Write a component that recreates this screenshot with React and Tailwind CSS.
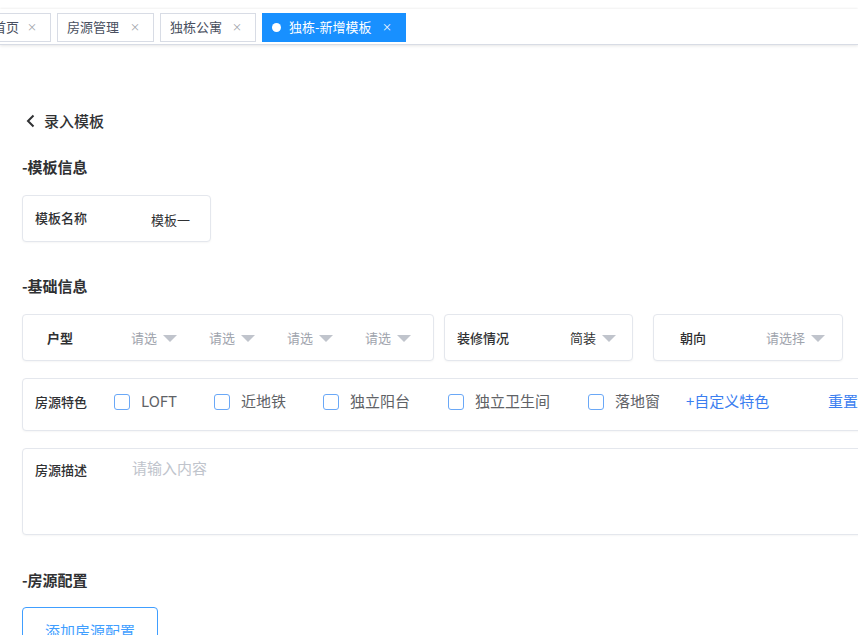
import React from "react";

const font = { fontFamily: '"Noto Sans CJK SC", "Noto Sans", sans-serif' };

function Tab({ label, active, className }) {
  if (active) {
    return (
      <div className={`flex items-center h-[29px] shrink-0 whitespace-nowrap bg-[#1890ff] border border-[#1890ff] text-white text-[13px] pl-[9px] pr-[13px] ${className || ""}`}>
        <span className="w-[9px] h-[9px] rounded-full bg-white mr-[8px] shrink-0" />
        <span className="whitespace-nowrap">{label}</span>
        <span className="ml-auto text-[10px] leading-none">×</span>
      </div>
    );
  }
  return (
    <div className={`flex items-center h-[29px] shrink-0 whitespace-nowrap bg-white border border-[#d8dce5] text-[#495060] text-[13px] pl-[9px] pr-[13px] ${className || ""}`}>
      <span className="whitespace-nowrap">{label}</span>
      <span className="ml-auto text-[10px] leading-none text-[#9a9ea6]">×</span>
    </div>
  );
}

function Caret() {
  return (
    <svg width="14" height="7" viewBox="0 0 14 7" className="shrink-0">
      <path d="M0 0 L14 0 L7 7 Z" fill="#c0c4cc" />
    </svg>
  );
}

function Select({ text, dark, className }) {
  return (
    <div className={`flex items-center ${className || ""}`}>
      <span className={dark ? "text-[#303133] text-[13px]" : "text-[#a0a4ad] text-[13px]"}>{text}</span>
      <span className="ml-[6px] mt-[1px]"><Caret /></span>
    </div>
  );
}

function Check({ label, className }) {
  return (
    <div className={`flex items-center ${className || ""}`}>
      <span className="w-[16px] h-[16px] rounded-[3px] border border-[#6aa8f7] bg-white shrink-0" />
      <span className="ml-[11px] text-[15px] text-[#606266] whitespace-nowrap">{label}</span>
    </div>
  );
}

const card = "bg-white border border-[#e4e7ed] rounded-[4px] shadow-[0_1px_2px_rgba(0,0,0,0.04)]";

export default function App() {
  return (
    <div className="w-[858px] h-[635px] overflow-hidden bg-white relative" style={font}>
      <div className="pt-[9px]">
        <div className="h-[36px] bg-white border-b border-[#d8dce5] shadow-[0_1px_3px_rgba(0,0,0,0.10),0_-1px_2px_rgba(0,0,0,0.04)] flex items-center pt-[1px] overflow-hidden">
          <div className="flex items-center gap-[6px] ml-[-17px]">
            <Tab label="首页" className="w-[68px]" />
            <Tab label="房源管理" className="w-[97px]" />
            <Tab label="独栋公寓" className="w-[96px]" />
            <Tab label="独栋-新增模板" active className="w-[144px]" />
          </div>
        </div>
      </div>

      <div className="pl-[22px] flex flex-col text-[#303133]">
        <div className="mt-[65px] h-[22px] flex items-center">
          <svg width="12" height="14" viewBox="0 0 12 14" className="ml-[3px]">
            <path d="M8.5 1.5 L3 7 L8.5 12.5" fill="none" stroke="#303133" strokeWidth="2" />
          </svg>
          <span className="ml-[7px] text-[15px] font-medium">录入模板</span>
        </div>

        <div className="mt-[24px] h-[22px] text-[15px] font-semibold leading-[22px]">-模板信息</div>

        <div className={`${card} mt-[17px] w-[189px] h-[47px] flex items-center pl-[12px]`}>
          <span className="text-[13px] font-medium text-[#303133] mb-[2px]">模板名称</span>
          <span className="ml-[64px] text-[13px] text-[#303133] mt-[2px]">模板一</span>
        </div>

        <div className="mt-[33px] h-[22px] text-[15px] font-semibold leading-[22px]">-基础信息</div>

        <div className="mt-[17px] flex items-center h-[47px]">
          <div className={`${card} w-[412px] h-[47px] flex items-center pl-[24px]`}>
            <span className="text-[13px] font-semibold w-[84px]">户型</span>
            <Select text="请选" className="w-[78px]" />
            <Select text="请选" className="w-[78px]" />
            <Select text="请选" className="w-[78px]" />
            <Select text="请选" />
          </div>
          <div className={`${card} ml-[10px] w-[189px] h-[47px] flex items-center pl-[12px]`}>
            <span className="text-[13px] font-medium w-[113px]">装修情况</span>
            <Select text="简装" dark />
          </div>
          <div className={`${card} ml-[20px] w-[190px] h-[47px] flex items-center pl-[26px]`}>
            <span className="text-[13px] font-medium w-[86px]">朝向</span>
            <Select text="请选择" />
          </div>
        </div>

        <div className={`${card} mt-[17px] w-[900px] h-[53px] flex items-center pl-[12px] pb-[6px]`}>
          <span className="text-[13px] font-medium w-[79px]">房源特色</span>
          <Check label="LOFT" className="w-[100px]" />
          <Check label="近地铁" className="w-[109px]" />
          <Check label="独立阳台" className="w-[125px]" />
          <Check label="独立卫生间" className="w-[140px]" />
          <Check label="落地窗" className="w-[98px]" />
          <span className="text-[15px] text-[#3b7ef0] w-[142px]">+自定义特色</span>
          <span className="text-[15px] text-[#3b7ef0]">重置</span>
        </div>

        <div className={`${card} mt-[17px] w-[900px] h-[87px] flex items-start pl-[12px] pt-[8px]`}>
          <span className="text-[13px] font-medium w-[97px] mt-[3px]">房源描述</span>
          <span className="text-[15px] text-[#c0c4cc]">请输入内容</span>
        </div>

        <div className="mt-[34px] h-[22px] text-[15px] font-semibold leading-[22px]">-房源配置</div>

        <div className="mt-[16px] w-[136px] h-[42px] border border-[#409eff] rounded-[4px] flex items-center justify-center text-[15px] text-[#409eff] pt-[6px]">
          添加房源配置
        </div>
      </div>
    </div>
  );
}
